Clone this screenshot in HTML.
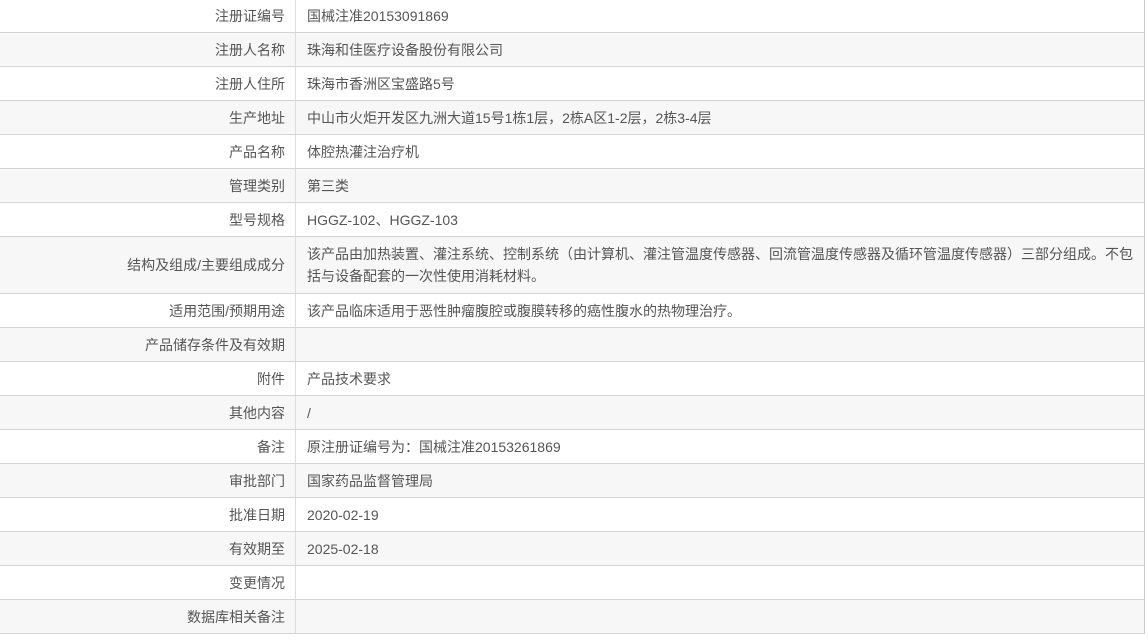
<!DOCTYPE html>
<html><head><meta charset="utf-8"><style>
*{margin:0;padding:0;box-sizing:border-box}
body{width:1148px;height:644px;background:#fff;font-family:"Liberation Sans","Noto Sans CJK SC",sans-serif;font-size:14px;color:#555;overflow:hidden;position:relative}
.t{position:absolute;left:0;top:0;width:1145px;border-right:1px solid #ccc}
.r{display:flex;border-bottom:1px solid #d4d4d4;height:34px;line-height:22px}
.r:nth-child(even){background:#f7f7f7}
.l{width:296px;border-right:1px solid #ddd;text-align:right;padding-right:10px;display:flex;align-items:center;justify-content:flex-end}
.v{flex:1;padding-left:11px;display:flex;align-items:center;padding-right:0}
.r.first{height:33px}
.r.tall{height:57px}
</style></head><body><div class="t">
<div class="r first"><div class="l">注册证编号</div><div class="v">国械注准20153091869</div></div>
<div class="r"><div class="l">注册人名称</div><div class="v">珠海和佳医疗设备股份有限公司</div></div>
<div class="r"><div class="l">注册人住所</div><div class="v">珠海市香洲区宝盛路5号</div></div>
<div class="r"><div class="l">生产地址</div><div class="v">中山市火炬开发区九洲大道15号1栋1层，2栋A区1-2层，2栋3-4层</div></div>
<div class="r"><div class="l">产品名称</div><div class="v">体腔热灌注治疗机</div></div>
<div class="r"><div class="l">管理类别</div><div class="v">第三类</div></div>
<div class="r"><div class="l">型号规格</div><div class="v">HGGZ-102、HGGZ-103</div></div>
<div class="r tall"><div class="l">结构及组成/主要组成成分</div><div class="v">该产品由加热装置、灌注系统、控制系统（由计算机、灌注管温度传感器、回流管温度传感器及循环管温度传感器）三部分组成。不包括与设备配套的一次性使用消耗材料。</div></div>
<div class="r"><div class="l">适用范围/预期用途</div><div class="v">该产品临床适用于恶性肿瘤腹腔或腹膜转移的癌性腹水的热物理治疗。</div></div>
<div class="r"><div class="l">产品储存条件及有效期</div><div class="v"></div></div>
<div class="r"><div class="l">附件</div><div class="v">产品技术要求</div></div>
<div class="r"><div class="l">其他内容</div><div class="v">/</div></div>
<div class="r"><div class="l">备注</div><div class="v">原注册证编号为：国械注准20153261869</div></div>
<div class="r"><div class="l">审批部门</div><div class="v">国家药品监督管理局</div></div>
<div class="r"><div class="l">批准日期</div><div class="v">2020-02-19</div></div>
<div class="r"><div class="l">有效期至</div><div class="v">2025-02-18</div></div>
<div class="r"><div class="l">变更情况</div><div class="v"></div></div>
<div class="r"><div class="l">数据库相关备注</div><div class="v"></div></div>
</div></body></html>
